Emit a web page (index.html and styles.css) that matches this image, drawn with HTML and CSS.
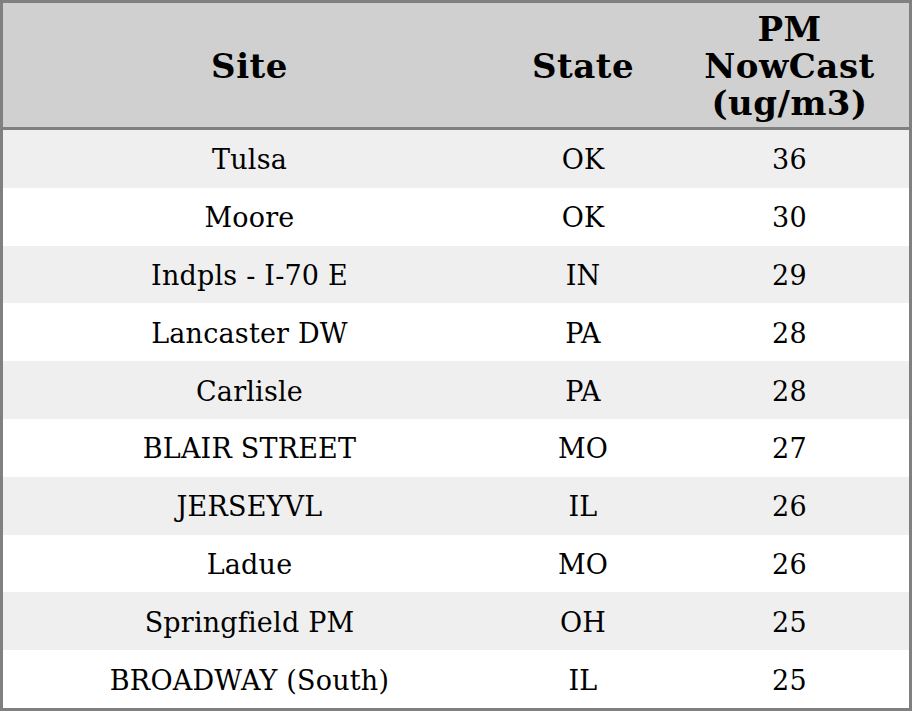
FILE: index.html
```html
<!DOCTYPE html>
<html>
<head>
<meta charset="utf-8">
<link rel="stylesheet" href="styles.css">
</head>
<body>
<table class="aq">
  <colgroup>
    <col class="c-site">
    <col class="c-state">
    <col class="c-pm">
  </colgroup>
  <thead>
    <tr><th>Site</th><th>State</th><th>PM<br>NowCast<br>(ug/m3)</th></tr>
  </thead>
  <tbody>
    <tr><td>Tulsa</td><td>OK</td><td>36</td></tr>
    <tr><td>Moore</td><td>OK</td><td>30</td></tr>
    <tr><td>Indpls - I-70 E</td><td>IN</td><td>29</td></tr>
    <tr><td>Lancaster DW</td><td>PA</td><td>28</td></tr>
    <tr><td>Carlisle</td><td>PA</td><td>28</td></tr>
    <tr><td>BLAIR STREET</td><td>MO</td><td>27</td></tr>
    <tr><td>JERSEYVL</td><td>IL</td><td>26</td></tr>
    <tr><td>Ladue</td><td>MO</td><td>26</td></tr>
    <tr><td>Springfield PM</td><td>OH</td><td>25</td></tr>
    <tr><td>BROADWAY (South)</td><td>IL</td><td>25</td></tr>
  </tbody>
</table>
</body>
</html>
```
FILE: styles.css
```css
html, body {
  margin: 0;
  padding: 0;
  background: #ffffff;
}
.aq {
  width: 912px;
  border-collapse: separate;
  border-spacing: 0;
  border: 3px solid #808080;
  table-layout: fixed;
  font-family: "DejaVu Serif", serif;
  color: #000;
}
.c-site { width: 493px; }
.c-state { width: 174px; }
.c-pm { width: 239px; }
.aq th {
  background: #d0d0d0;
  font-size: 34px;
  letter-spacing: 0.5px;
  font-weight: bold;
  line-height: 37px;
  height: 122px;
  padding: 2px 0 0 0;
  text-align: center;
  vertical-align: middle;
  border-bottom: 3px solid #808080;
}
.aq td {
  font-size: 27px;
  letter-spacing: 0.2px;
  line-height: 30px;
  height: 54.8px;
  padding: 3px 0 0 0;
  text-align: center;
  vertical-align: middle;
}
.aq tbody tr:nth-child(odd) td {
  background: #efefef;
}
```
